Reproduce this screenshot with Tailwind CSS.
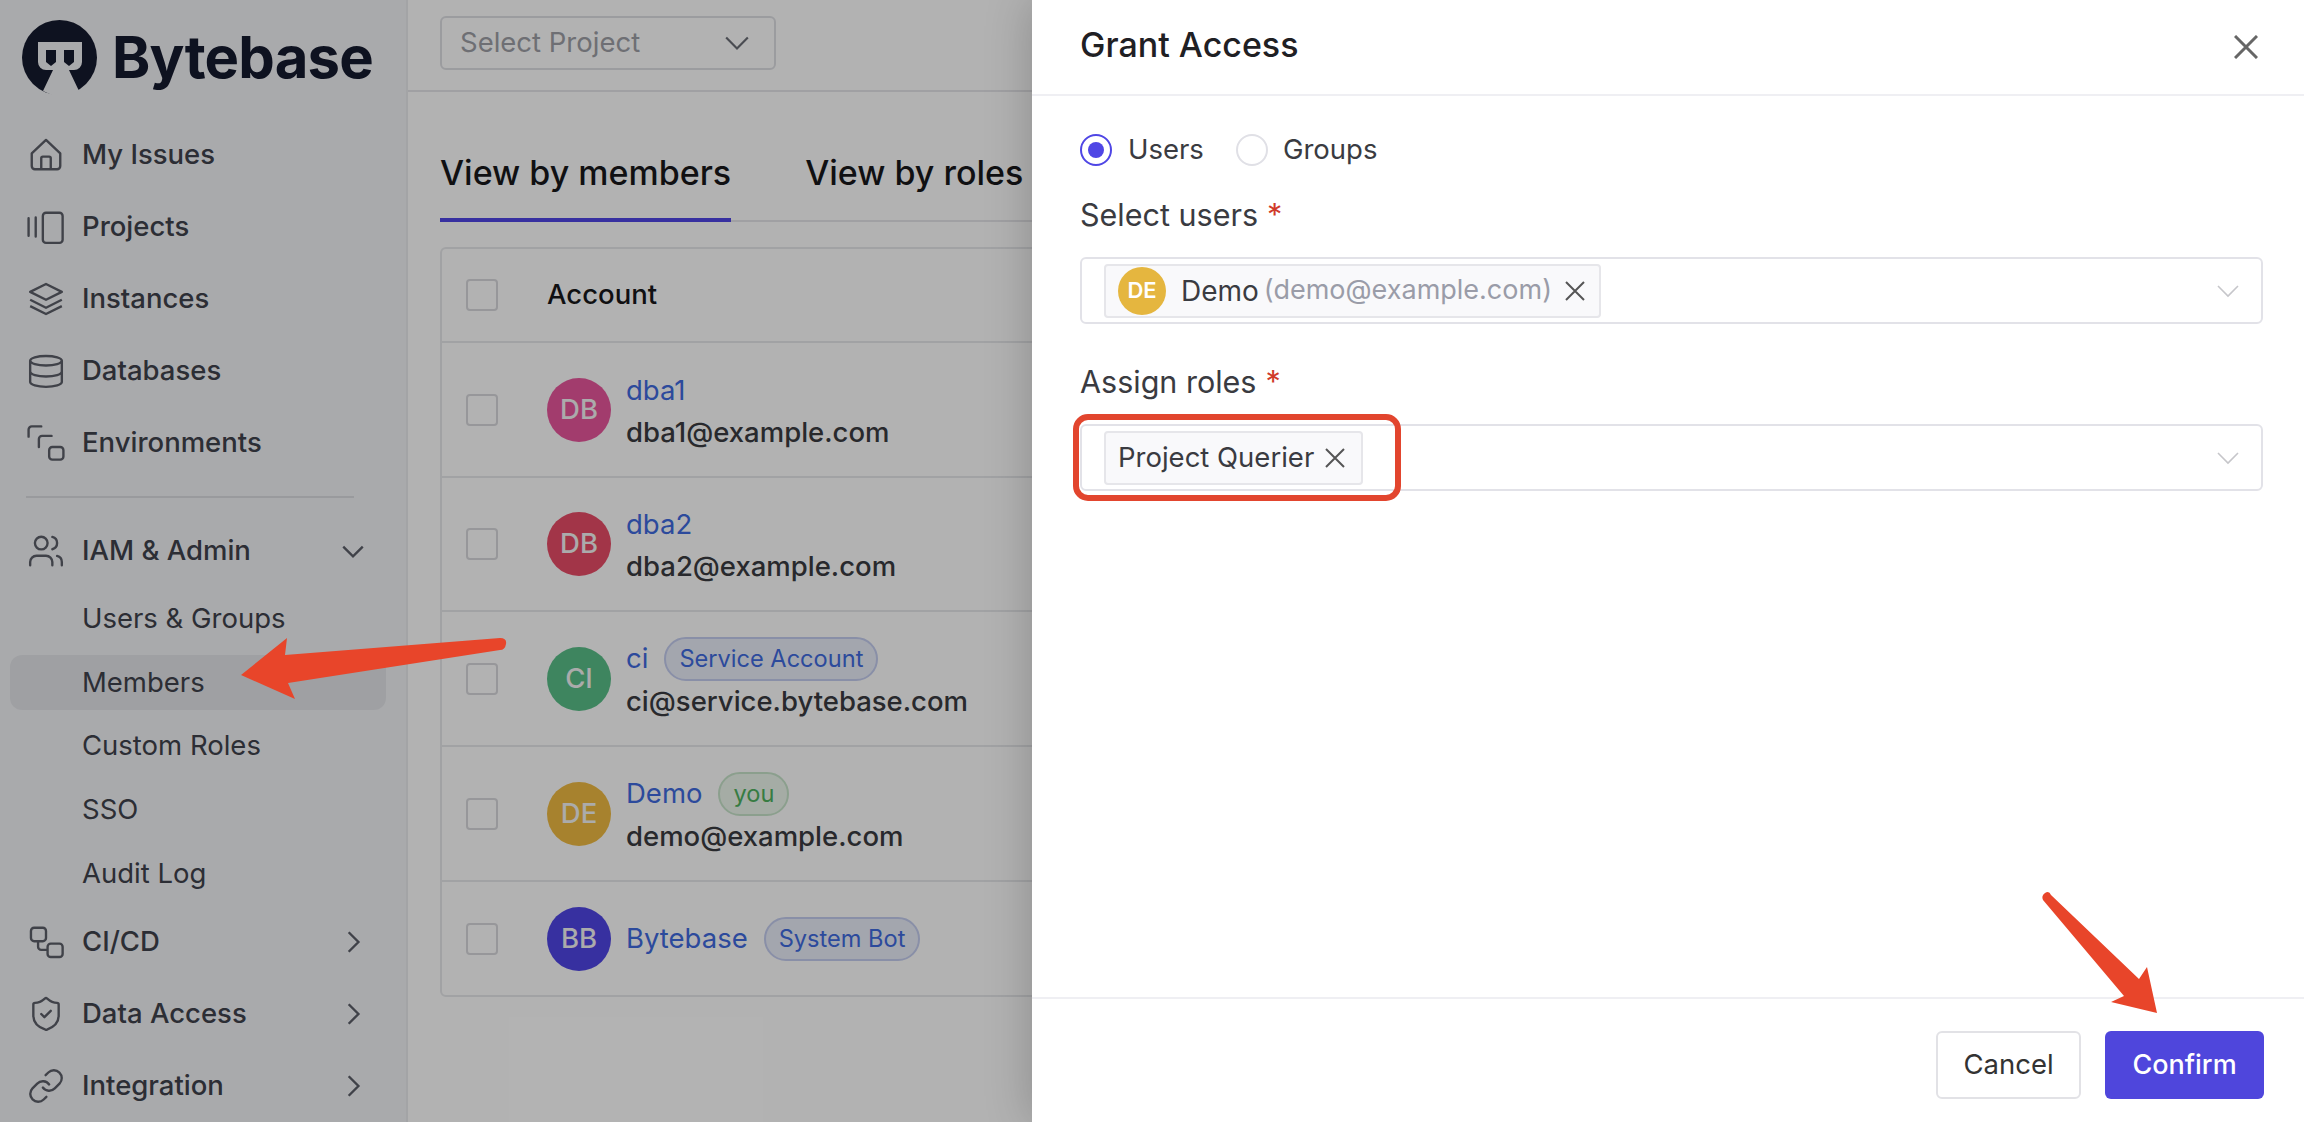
<!DOCTYPE html>
<html lang="en">
<head>
    <meta charset="UTF-8">
    <meta name="viewport" content="width=device-width, initial-scale=1.0">
    <title>Bytebase - Members</title>
    <script src="https://cdn.jsdelivr.net/npm/@tailwindcss/browser@4"></script>
</head>
<body class="font-[Inter,sans-serif] text-[27.5px] bg-white overflow-hidden">
    <div class="relative flex w-[2304px] h-[1122px] overflow-hidden">

        <!-- Sidebar -->
        <aside class="w-[408px] shrink-0 bg-[#f3f4f7] border-r-2 border-[#eaebee] text-[#3f424c] font-medium">
            <div class="h-[118px] flex items-start pl-[22px] pt-[20px] gap-[15px]">
                <svg class="w-[75px] h-[75px] shrink-0" viewBox="0 0 75 75">
                    <circle cx="37.5" cy="37.5" r="37.5" fill="#151a2e"/>
                    <path d="M16 22H60V42a8 8 0 0 1-8 8H47L57 71 48 75H30L21 71 31 50H24a8 8 0 0 1-8-8Z" fill="#f3f4f7"/>
                    <path d="M24 30H34V42L29 46 24 42Z" fill="#151a2e"/>
                    <path d="M42 30H52V42L47 46 42 42Z" fill="#151a2e"/>
                </svg>
                <span class="font-bold text-[58px] leading-[75px] text-[#151a2e] tracking-[-0.8px]">Bytebase</span>
            </div>

            <nav class="pt-[1px]">
                <a class="h-[72px] flex items-center pl-[27px] gap-[17px]">
                    <svg class="w-[38px] h-[38px]" viewBox="0 0 24 24" fill="none" stroke="#5c5f69" stroke-width="1.5" stroke-linejoin="round"><path d="M3 11 12 2.5 21 11V19a2 2 0 0 1-2 2H5a2 2 0 0 1-2-2Z"/><path d="M9 21V14a1 1 0 0 1 1-1h4a1 1 0 0 1 1 1v7"/></svg>
                    My Issues
                </a>
                <a class="h-[72px] flex items-center pl-[27px] gap-[17px]">
                    <svg class="w-[38px] h-[38px]" viewBox="0 0 24 24" fill="none" stroke="#5c5f69" stroke-width="1.5" stroke-linecap="round"><path d="M1 6.5v11M5.5 6v12"/><rect x="10" y="3" width="12.5" height="19" rx="2"/></svg>
                    Projects
                </a>
                <a class="h-[72px] flex items-center pl-[27px] gap-[17px]">
                    <svg class="w-[38px] h-[38px]" viewBox="0 0 24 24" fill="none" stroke="#5c5f69" stroke-width="1.5" stroke-linejoin="round"><path d="M12 2.5 2 7.5l10 5 10-5Z"/><path d="M2 12.5l10 5 10-5"/><path d="M2 16.5l10 5 10-5"/></svg>
                    Instances
                </a>
                <a class="h-[72px] flex items-center pl-[27px] gap-[17px]">
                    <svg class="w-[38px] h-[38px]" viewBox="0 0 24 24" fill="none" stroke="#5c5f69" stroke-width="1.5"><ellipse cx="12" cy="5.5" rx="10" ry="3"/><path d="M2 5.5V19a10 3 0 0 0 20 0V5.5"/><path d="M2 12.5a10 3 0 0 0 20 0"/></svg>
                    Databases
                </a>
                <a class="h-[72px] flex items-center pl-[27px] gap-[17px]">
                    <svg class="w-[38px] h-[38px]" viewBox="0 0 24 24" fill="none" stroke="#5c5f69" stroke-width="1.5" stroke-linecap="round"><path d="M9 1.5H3a2 2 0 0 0-2 2V8"/><path d="M15.5 7.5H9.5a2 2 0 0 0-2 2v5"/><rect x="14" y="14.5" width="9" height="8" rx="2"/></svg>
                    Environments
                </a>
                <div class="h-[2px] w-[328px] ml-[26px] mt-[17px] mb-[17px] bg-[#dcdde1]"></div>

                <a class="h-[72px] flex items-center pl-[27px] gap-[17px]">
                    <svg class="w-[38px] h-[38px]" viewBox="0 0 24 24" fill="none" stroke="#5c5f69" stroke-width="1.5" stroke-linecap="round"><path d="M16 21v-2a4 4 0 0 0-4-4H6a4 4 0 0 0-4 4v2"/><circle cx="9" cy="7" r="4"/><path d="M22 21v-2a4 4 0 0 0-3-3.87"/><path d="M16 3.13a4 4 0 0 1 0 7.75"/></svg>
                    IAM &amp; Admin
                    <svg class="w-[26px] h-[26px] ml-auto mr-[40px]" viewBox="0 0 24 24" fill="none" stroke="#5c5f69" stroke-width="2.2"><path d="m3 8 9 9 9-9"/></svg>
                </a>
                <a class="h-[64px] flex items-center pl-[82px] font-normal">Users &amp; Groups</a>
                <a class="h-[55px] my-[4px] ml-[10px] w-[376px] flex items-center pl-[72px] rounded-[12px] bg-[#e4e6ea] font-normal">Members</a>
                <a class="h-[64px] flex items-center pl-[82px] font-normal">Custom Roles</a>
                <a class="h-[64px] flex items-center pl-[82px] font-normal">SSO</a>
                <a class="h-[64px] flex items-center pl-[82px] font-normal">Audit Log</a>

                <a class="h-[72px] flex items-center pl-[27px] gap-[17px]">
                    <svg class="w-[38px] h-[38px]" viewBox="0 0 24 24" fill="none" stroke="#5c5f69" stroke-width="1.5"><rect x="2.5" y="3" width="9.5" height="8.5" rx="2"/><rect x="13" y="13" width="9.5" height="8.5" rx="2"/><path d="M7 11.5V15a2 2 0 0 0 2 2h4"/></svg>
                    CI/CD
                    <svg class="w-[26px] h-[26px] ml-auto mr-[40px]" viewBox="0 0 24 24" fill="none" stroke="#5c5f69" stroke-width="2.2"><path d="m8 3 9 9-9 9"/></svg>
                </a>
                <a class="h-[72px] flex items-center pl-[27px] gap-[17px]">
                    <svg class="w-[38px] h-[38px]" viewBox="0 0 24 24" fill="none" stroke="#5c5f69" stroke-width="1.5" stroke-linecap="round" stroke-linejoin="round"><path d="M20 13c0 5-3.5 7.5-7.66 8.95a1 1 0 0 1-.67-.01C7.5 20.5 4 18 4 13V6a1 1 0 0 1 1-1c2 0 4.5-1.2 6.24-2.72a1.17 1.17 0 0 1 1.52 0C14.51 3.81 17 5 19 5a1 1 0 0 1 1 1z"/><path d="m9 12 2 2 4-4"/></svg>
                    Data Access
                    <svg class="w-[26px] h-[26px] ml-auto mr-[40px]" viewBox="0 0 24 24" fill="none" stroke="#5c5f69" stroke-width="2.2"><path d="m8 3 9 9-9 9"/></svg>
                </a>
                <a class="h-[72px] flex items-center pl-[27px] gap-[17px]">
                    <svg class="w-[38px] h-[38px]" viewBox="0 0 24 24" fill="none" stroke="#5c5f69" stroke-width="1.5" stroke-linecap="round" stroke-linejoin="round"><path d="M10 13a5 5 0 0 0 7.54.54l3-3a5 5 0 0 0-7.07-7.07l-1.72 1.71"/><path d="M14 11a5 5 0 0 0-7.54-.54l-3 3a5 5 0 0 0 7.07 7.07l1.71-1.71"/></svg>
                    Integration
                    <svg class="w-[26px] h-[26px] ml-auto mr-[40px]" viewBox="0 0 24 24" fill="none" stroke="#5c5f69" stroke-width="2.2"><path d="m8 3 9 9-9 9"/></svg>
                </a>
            </nav>
        </aside>

        <!-- Main page -->
        <main class="flex-1 min-w-0">
            <div class="h-[92px] border-b-2 border-[#e5e6ea] pl-[32px] pt-[16px]">
                <div class="w-[336px] h-[54px] border-2 border-[#dfe0e4] rounded-[6px] flex items-center pl-[18px] pr-[24px] justify-between text-[#9ea0a6]">
                    Select Project
                    <svg class="w-[26px] h-[26px]" viewBox="0 0 24 24" fill="none" stroke="#6b6e76" stroke-width="2"><path d="m2 7 10 10L22 7"/></svg>
                </div>
            </div>

            <div class="px-[32px]">
                <div class="h-[130px] flex items-end gap-[74px] border-b-2 border-[#e5e6ea] text-[34px] font-medium text-[#18181b]">
                    <div class="h-[72px] leading-[46px] border-b-[4px] border-[#4f46e5] -mb-[2px]">View by members</div>
                    <div class="h-[72px] leading-[46px] -mb-[2px]">View by roles</div>
                </div>

                <div class="mt-[25px] w-[1000px] border-2 border-[#e7e8eb] rounded-[6px] text-[#3a3b41]">
                    <div class="h-[94px] flex items-center pl-[24px] border-b-2 border-[#e7e8eb] font-medium text-[#18181b]">
                        <span class="w-[32px] h-[32px] border-2 border-[#d8d9dd] rounded-[4px] mr-[49px]"></span>
                        Account
                    </div>

                    <div class="h-[135px] flex items-center pl-[24px] border-b-2 border-[#e7e8eb]">
                        <span class="w-[32px] h-[32px] border-2 border-[#d8d9dd] rounded-[4px] mr-[49px]"></span>
                        <span class="w-[64px] h-[64px] rounded-full bg-[#e8579d] text-[#f5f5f5] flex items-center justify-center font-medium mr-[15px]">DB</span>
                        <div class="pt-[2px]">
                            <div class="h-[42px] leading-[42px] text-[#3f6be0]">dba1</div>
                            <div class="h-[42px] leading-[42px] font-medium">dba1@example.com</div>
                        </div>
                    </div>
                    <div class="h-[134px] flex items-center pl-[24px] border-b-2 border-[#e7e8eb]">
                        <span class="w-[32px] h-[32px] border-2 border-[#d8d9dd] rounded-[4px] mr-[49px]"></span>
                        <span class="w-[64px] h-[64px] rounded-full bg-[#e94c67] text-[#f5f5f5] flex items-center justify-center font-medium mr-[15px]">DB</span>
                        <div class="pt-[2px]">
                            <div class="h-[42px] leading-[42px] text-[#3f6be0]">dba2</div>
                            <div class="h-[42px] leading-[42px] font-medium">dba2@example.com</div>
                        </div>
                    </div>
                    <div class="h-[135px] flex items-center pl-[24px] border-b-2 border-[#e7e8eb]">
                        <span class="w-[32px] h-[32px] border-2 border-[#d8d9dd] rounded-[4px] mr-[49px]"></span>
                        <span class="w-[64px] h-[64px] rounded-full bg-[#5abf89] text-[#f5f5f5] flex items-center justify-center font-medium mr-[15px]">CI</span>
                        <div class="pt-[2px]">
                            <div class="h-[42px] flex items-center gap-[16px] text-[#3f6be0]">
                                ci
                                <span class="h-[44px] px-[13px] flex items-center rounded-full border-2 border-[#c4cdf0] bg-[#eaeefa] text-[23.6px]">Service Account</span>
                            </div>
                            <div class="h-[42px] leading-[42px] font-medium">ci@service.bytebase.com</div>
                        </div>
                    </div>
                    <div class="h-[135px] flex items-center pl-[24px] border-b-2 border-[#e7e8eb]">
                        <span class="w-[32px] h-[32px] border-2 border-[#d8d9dd] rounded-[4px] mr-[49px]"></span>
                        <span class="w-[64px] h-[64px] rounded-full bg-[#f0bb42] text-[#f5f5f5] flex items-center justify-center font-medium mr-[15px]">DE</span>
                        <div class="pt-[2px]">
                            <div class="h-[42px] flex items-center gap-[16px] text-[#3f6be0]">
                                Demo
                                <span class="h-[44px] px-[13px] flex items-center rounded-full border-2 border-[#c8e4cb] bg-[#ecf6ed] text-[23.6px] text-[#4fb25f]">you</span>
                            </div>
                            <div class="h-[42px] leading-[42px] font-medium">demo@example.com</div>
                        </div>
                    </div>
                    <div class="h-[113px] flex items-center pl-[24px]">
                        <span class="w-[32px] h-[32px] border-2 border-[#d8d9dd] rounded-[4px] mr-[49px]"></span>
                        <span class="w-[64px] h-[64px] rounded-full bg-[#4f46e5] text-[#f5f5f5] flex items-center justify-center font-medium mr-[15px]">BB</span>
                        <div class="flex items-center gap-[16px] text-[#3f6be0]">
                            Bytebase
                            <span class="h-[44px] px-[13px] flex items-center rounded-full border-2 border-[#c4cdf0] bg-[#eaeefa] text-[23.6px]">System Bot</span>
                        </div>
                    </div>
                </div>
            </div>
        </main>

        <!-- Dim layer -->
        <div class="absolute inset-0 bg-black/30"></div>

        <!-- Grant Access drawer -->
        <section class="absolute top-0 right-0 bottom-0 w-[1272px] bg-white flex flex-col shadow-[0_0_44px_rgba(0,0,0,0.22)] text-[#3a3b41]">
            <div class="h-[96px] shrink-0 border-b-2 border-[#efeff3] flex items-center justify-between pl-[48px] pr-[46px]">
                <span class="text-[34px] font-medium text-[#1f2024] pb-[5px]">Grant Access</span>
                <svg class="w-[24px] h-[24px]" viewBox="0 0 24 24" fill="none" stroke="#666" stroke-width="3"><path d="M1 1 23 23M23 1 1 23"/></svg>
            </div>

            <div class="flex-1 pl-[48px] pr-[41px] pt-[38px]">
                <div class="flex items-center h-[32px]">
                    <span class="w-[32px] h-[32px] rounded-full border-2 border-[#4f46e5] flex items-center justify-center mr-[16px]"><span class="w-[16px] h-[16px] rounded-full bg-[#4f46e5]"></span></span>
                    <span class="mr-[32px]">Users</span>
                    <span class="w-[32px] h-[32px] rounded-full border-2 border-[#e0e0e6] mr-[15px]"></span>
                    <span>Groups</span>
                </div>

                <div class="mt-[27px] h-[44px] leading-[44px] flex text-[30.5px]">Select users<span class="text-[#d03a2a] ml-[9px]">*</span></div>
                <div class="mt-[20px] h-[67px] border-2 border-[#e2e2e8] rounded-[6px] flex items-center pl-[22px] pr-[22px]">
                    <div class="h-[54px] flex items-center border-2 border-[#e6e6ea] rounded-[4px] bg-[#f9f9fb] pl-[12px] pr-[14px]">
                        <span class="w-[48px] h-[48px] rounded-full bg-[#e5b63f] text-white text-[22px] font-semibold flex items-center justify-center mr-[15px]">DE</span>
                        <span class="mr-[5px] text-[28px]">Demo</span>
                        <span class="text-[#9a9ca8] text-[27px]">(demo@example.com)</span>
                        <svg class="w-[20px] h-[20px] ml-[13px]" viewBox="0 0 20 20" fill="none" stroke="#555" stroke-width="2"><path d="M1 1 19 19M19 1 1 19"/></svg>
                    </div>
                    <svg class="w-[22px] h-[22px] ml-auto" viewBox="0 0 22 22" fill="none" stroke="#c6c6ca" stroke-width="1.6"><path d="M1 6 11 16 21 6"/></svg>
                </div>

                <div class="mt-[36px] h-[44px] leading-[44px] flex text-[30.5px]">Assign roles<span class="text-[#d03a2a] ml-[9px]">*</span></div>
                <div class="mt-[20px] h-[67px] border-2 border-[#e2e2e8] rounded-[6px] flex items-center pl-[22px] pr-[22px]">
                    <div class="h-[54px] flex items-center border-2 border-[#e6e6ea] rounded-[4px] bg-[#f9f9fb] pl-[12px] pr-[16px]">
                        <span>Project Querier</span>
                        <svg class="w-[20px] h-[20px] ml-[11px]" viewBox="0 0 20 20" fill="none" stroke="#555" stroke-width="2"><path d="M1 1 19 19M19 1 1 19"/></svg>
                    </div>
                    <svg class="w-[22px] h-[22px] ml-auto" viewBox="0 0 22 22" fill="none" stroke="#c6c6ca" stroke-width="1.6"><path d="M1 6 11 16 21 6"/></svg>
                </div>
            </div>

            <div class="h-[125px] shrink-0 border-t-2 border-[#efeff3] flex items-center justify-end gap-[24px] pr-[40px] pt-[9px]">
                <button class="w-[145px] h-[68px] border-2 border-[#e2e2e6] rounded-[6px] bg-white text-[#333]">Cancel</button>
                <button class="w-[159px] h-[68px] rounded-[6px] bg-[#4f46dc] text-white font-medium text-[27px]">Confirm</button>
            </div>
        </section>

        <!-- Red annotations drawn on top of the screenshot -->
        <svg class="absolute inset-0 pointer-events-none" width="2304" height="1122" viewBox="0 0 2304 1122">
            <path d="M241 675 287 638 285 655 500 638Q507 638 506 644T500 650L288 683 295 699Z" fill="#e8452a"/>
            <path d="M2043 900Q2041 896 2045 893T2051 895L2139 979 2147 967 2157 1013 2111 1002 2124 996Z" fill="#e8452a"/>
            <rect x="1076" y="417" width="322" height="81" rx="12" fill="none" stroke="#e2452e" stroke-width="6"/>
        </svg>
    </div>
</body>
</html>
